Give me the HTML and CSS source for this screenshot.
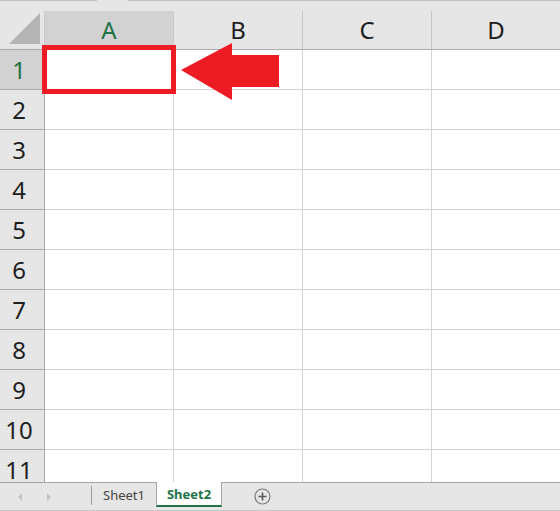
FILE: index.html
```html
<!DOCTYPE html>
<html lang="en">
<head>
<meta charset="UTF-8" />
<title>Sheet</title>
<link rel="stylesheet" href="styles.css">
</head>
<body>

<div class="app">
  <div class="formula-edge">
    <span class="edge-left"></span>
    <span class="edge-right"></span>
  </div>

  <div class="view">
    <div class="sheet">
      <div class="corner">
        <svg width="32" height="32" viewBox="0 0 32 32"><polygon points="0,31 31,31 31,0" fill="#b4b4b4"/></svg>
      </div>
      <div class="col-head active">A</div>
      <div class="col-head">B</div>
      <div class="col-head">C</div>
      <div class="col-head">D</div>
    </div>

    <div class="sheet" id="rows"></div>

    <div class="selection"></div>
    <svg class="arrow" width="100" height="60" viewBox="180 42 100 60">
      <polygon points="181,70 232,43 232,55 279,55 279,87 232,87 232,100" fill="#ed1c24"/>
    </svg>
  </div>

  <div class="tabbar">
    <div class="nav">
      <span class="tri tri-left"></span>
      <span class="tri tri-right"></span>
    </div>
    <div class="sep"></div>
    <div class="tab">Sheet1</div>
    <div class="tab current">Sheet2</div>
    <div class="add">
      <svg width="17" height="17" viewBox="0 0 17 17">
        <circle cx="8.5" cy="8.5" r="7.5" fill="none" stroke="#7a7a7a" stroke-width="1.2"/>
        <path d="M8.5 4.5v8M4.5 8.5h8" stroke="#5a5a5a" stroke-width="1.6"/>
      </svg>
    </div>
  </div>
</div>

<script>
  const rows = document.getElementById('rows');
  for (let i = 1; i <= 11; i++) {
    const head = document.createElement('div');
    head.className = 'row-head' + (i === 1 ? ' active' : '');
    head.textContent = i;
    rows.appendChild(head);
    for (let c = 0; c < 4; c++) {
      const cell = document.createElement('div');
      cell.className = 'cell';
      rows.appendChild(cell);
    }
  }
</script>

</body>
</html>
```

FILE: styles.css
```css
html, body {
  margin: 0;
  padding: 0;
  overflow: hidden;
  background: #ffffff;
}
body {
  font-family: 'Noto Sans', 'Open Sans', sans-serif;
  color: #222;
}
.app {
  width: 560px;
  height: 511px;
  display: flex;
  flex-direction: column;
}
.formula-edge {
  height: 11px;
  background: #e6e6e6;
  display: flex;
  flex-shrink: 0;
}
.edge-left {
  width: 97px;
  border-top: 1px solid #c2c2c2;
}
.edge-right {
  flex: 1;
  margin-left: 31px;
  border-top: 1px solid #c2c2c2;
}
.view {
  position: relative;
  height: 471px;
  overflow: hidden;
  flex-shrink: 0;
}
.sheet {
  display: grid;
  grid-template-columns: 45px repeat(4, 129px);
  width: 561px;
}
.sheet > div {
  box-sizing: border-box;
}
.corner {
  height: 39px;
  background: #e6e6e6;
  border-right: 1px solid #c8c8c8;
  border-bottom: 1px solid #ababab;
  display: flex;
  align-items: flex-end;
  justify-content: flex-end;
  padding: 0 3px 4px 0;
}
.corner svg {
  display: block;
}
.col-head {
  height: 39px;
  background: #e6e6e6;
  border-right: 1px solid #c6c6c6;
  border-bottom: 1px solid #ababab;
  text-align: center;
  font-size: 24px;
  line-height: 38px;
  color: #1e1e1e;
}
.col-head.active,
.row-head.active {
  background: #d2d2d2;
  color: #217346;
}
.row-head {
  height: 40px;
  background: #e6e6e6;
  border-right: 1px solid #ababab;
  border-bottom: 1px solid #ababab;
  text-align: center;
  padding-right: 6px;
  font-size: 24px;
  line-height: 39px;
  color: #1e1e1e;
}
.cell {
  height: 40px;
  border-right: 1px solid #d4d4d4;
  border-bottom: 1px solid #d4d4d4;
}
.selection {
  position: absolute;
  left: 42px;
  top: 34px;
  width: 134px;
  height: 49px;
  box-sizing: border-box;
  border: 5px solid #ed1c24;
}
.arrow {
  position: absolute;
  left: 180px;
  top: 31px;
}
.tabbar {
  height: 29px;
  box-sizing: border-box;
  background: #e6e6e6;
  border-top: 1px solid #a6a6a6;
  border-bottom: 1px solid #c8c8c8;
  display: flex;
  align-items: flex-start;
  font-size: 13px;
}
.nav {
  width: 91px;
  height: 27px;
  display: flex;
  align-items: center;
  padding-left: 18px;
  box-sizing: border-box;
  gap: 25px;
}
.tri {
  width: 0;
  height: 0;
  border-top: 4px solid transparent;
  border-bottom: 4px solid transparent;
}
.tri-left {
  border-right: 4px solid #c4c4c4;
}
.tri-right {
  border-left: 4px solid #c4c4c4;
}
.sep {
  width: 1px;
  height: 19px;
  margin-top: 3px;
  background: #9c9c9c;
}
.tab {
  width: 64px;
  height: 24px;
  line-height: 24px;
  text-align: center;
  color: #444;
  box-sizing: border-box;
}
.tab.current {
  width: 66px;
  height: 25px;
  margin-top: -1px;
  line-height: 25px;
  background: #ffffff;
  color: #217346;
  font-weight: 700;
  border-left: 1px solid #a6a6a6;
  border-right: 1px solid #a6a6a6;
  border-bottom: 2px solid #217346;
}
.add {
  margin-left: 32px;
  height: 27px;
  display: flex;
  align-items: center;
}
.add svg {
  display: block;
}
```
